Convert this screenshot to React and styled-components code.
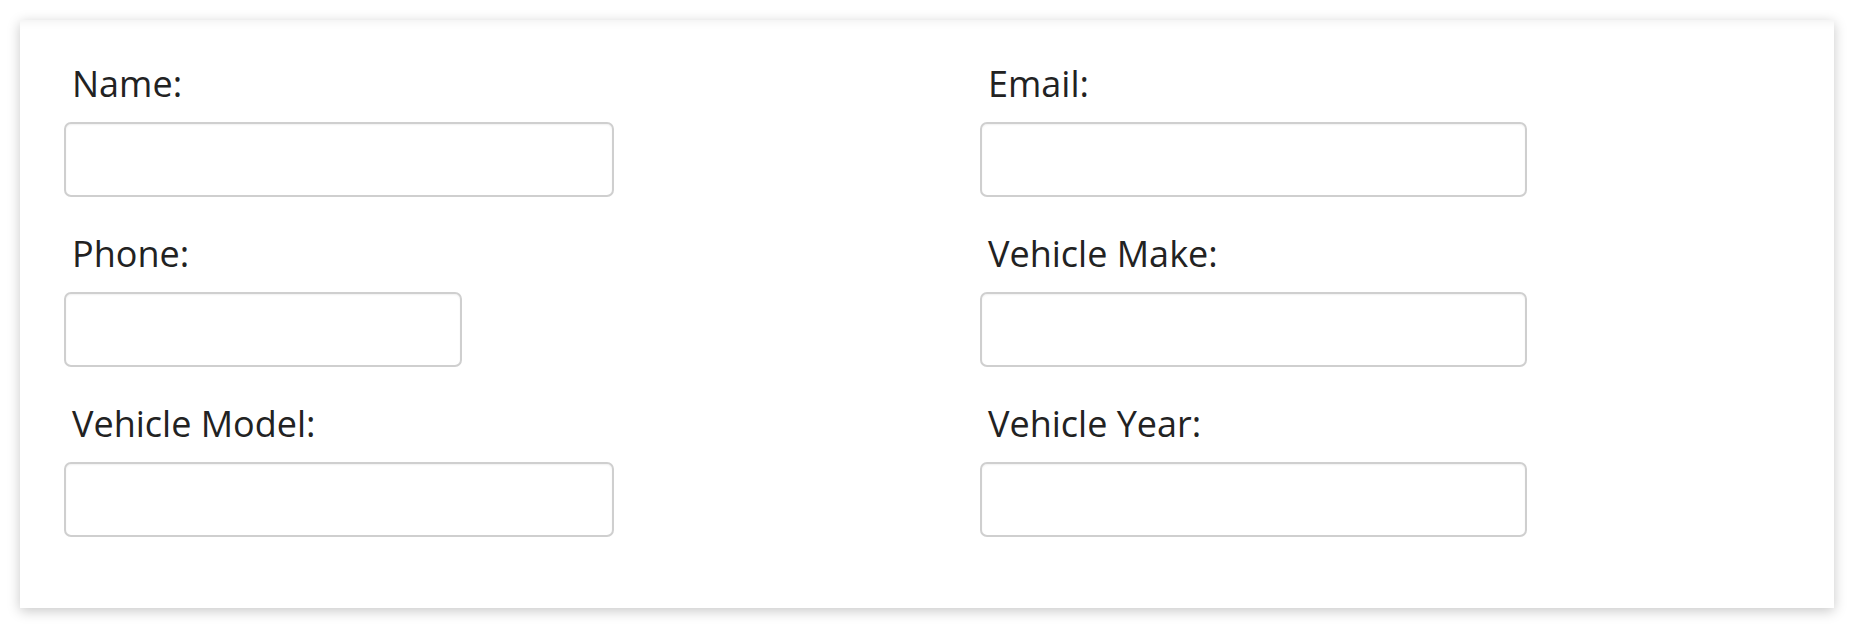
import styled, { createGlobalStyle } from 'styled-components';

const GlobalStyle = createGlobalStyle`
  body {
    margin: 0;
    background: #ffffff;
    font-family: 'Open Sans', 'Noto Sans', sans-serif;
    color: #222222;
  }
`;

const fields = [
  { id: 'name', label: 'Name:', type: 'text' },
  { id: 'email', label: 'Email:', type: 'email' },
  { id: 'phone', label: 'Phone:', type: 'tel', short: true },
  { id: 'make', label: 'Vehicle Make:', type: 'text' },
  { id: 'model', label: 'Vehicle Model:', type: 'text' },
  { id: 'year', label: 'Vehicle Year:', type: 'text' },
];

const App = () => {
  return (
    <>
      <GlobalStyle />
      <Page>
        <Card>
          <Form onSubmit={(e) => e.preventDefault()}>
            {fields.map((f) => (
              <Field key={f.id}>
                <Label htmlFor={f.id}>{f.label}</Label>
                <Input id={f.id} type={f.type} $short={f.short} />
              </Field>
            ))}
          </Form>
        </Card>
      </Page>
    </>
  );
};

export default App;

const Page = styled.div`
  padding: 20px;
`;

const Card = styled.div`
  background: #ffffff;
  height: 588px;
  box-sizing: border-box;
  padding: 41px 44px 0;
  box-shadow: 0 3px 12px rgba(0, 0, 0, 0.22), inset 0 12px 12px -12px rgba(0, 0, 0, 0.08);
`;

const Form = styled.form`
  display: grid;
  grid-template-columns: 550px 547px;
  column-gap: 366px;
  row-gap: 34px;
`;

const Field = styled.div`
  display: flex;
  flex-direction: column;
  align-items: flex-start;
`;

const Label = styled.label`
  font-size: 36px;
  line-height: 46px;
  padding-left: 8px;
  margin-bottom: 15px;
  color: #222222;
`;

const Input = styled.input`
  box-sizing: border-box;
  width: ${(props) => (props.$short ? '398px' : '100%')};
  height: 75px;
  border: 2px solid #cfcfcf;
  border-radius: 7px;
  background: #ffffff;
  box-shadow: inset 0 1px 2px rgba(0, 0, 0, 0.06);
  font-family: inherit;
  font-size: 28px;
  padding: 0 12px;
  outline: none;
`;
